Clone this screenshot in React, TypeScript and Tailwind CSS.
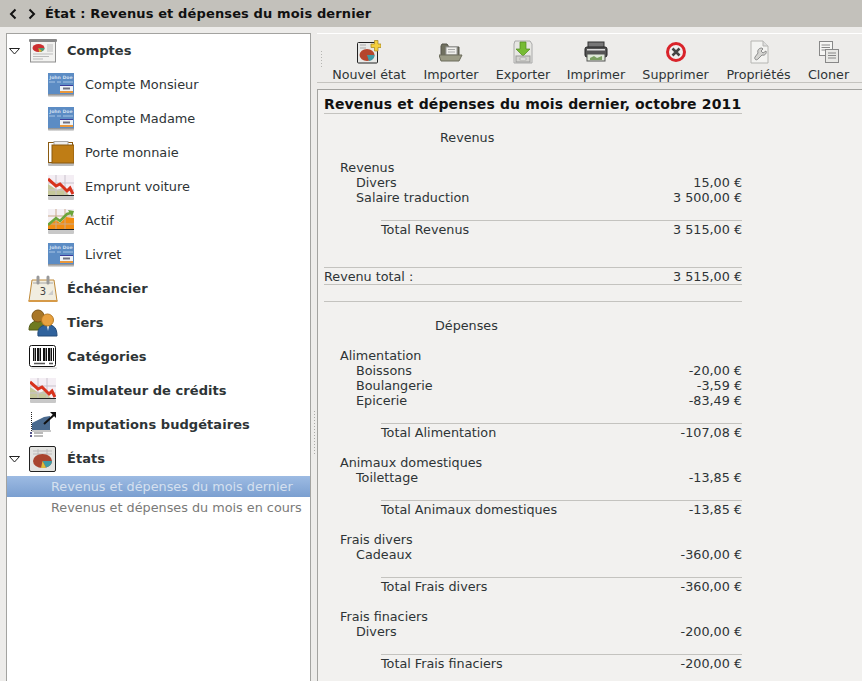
import type { ReactNode } from 'react';

const font = "[font-family:'DejaVu_Sans',sans-serif]";

function CardIcon() {
  return (
    <svg width="26" height="26" viewBox="0 0 26 26" className="shrink-0">
      <defs>
        <linearGradient id="cardshadow" x1="0" y1="0" x2="0" y2="1">
          <stop offset="0" stopColor="#666" />
          <stop offset="1" stopColor="#e4e4e4" />
        </linearGradient>
      </defs>
      <rect x="0" y="20" width="26" height="4" rx="1" fill="url(#cardshadow)" />
      <rect x="0" y="0" width="26" height="21" fill="#5c8cc4" />
      <text x="13" y="5.5" fontSize="4.6" fontWeight="bold" fill="#cfdff0" textAnchor="middle" fontFamily="DejaVu Sans">John Doe</text>
      <path d="M1 9H7M9 9H13M15 9H25" stroke="#a9c5e4" strokeWidth="1" />
      <rect x="12" y="12" width="13" height="1" fill="#3d3d9a" />
      <rect x="12" y="13" width="13" height="5" fill="#eef2f7" />
      <rect x="15" y="14.5" width="7" height="2" fill="#707080" />
      <rect x="12" y="18" width="13" height="2" fill="#e8973c" />
    </svg>
  );
}

function WalletIcon() {
  return (
    <svg width="26" height="26" viewBox="0 0 26 26" className="shrink-0">
      <rect x="0" y="21" width="26" height="4" rx="1" fill="#bbb" />
      <rect x="0.5" y="1.5" width="24" height="20" fill="#fff" stroke="#8a5a10" />
      <rect x="6" y="0.5" width="14" height="5" fill="#eee" stroke="#aaa" />
      <rect x="4" y="4" width="22" height="18" fill="#bf7d15" stroke="#8a5a10" />
    </svg>
  );
}

function ChartDownIcon() {
  return (
    <svg width="26" height="26" viewBox="0 0 26 26" className="shrink-0">
      <rect x="0" y="21" width="26" height="4" rx="1" fill="#c8c8c8" />
      <rect x="0" y="0" width="26" height="21" fill="#f4eef4" />
      <path d="M0 9L9 15L14 13L21 20L26 20V21H0Z" fill="#c5c79a" />
      <path d="M0 8H26M0 15H26M8 0V21M17 0V21" stroke="#c9c2cc" strokeWidth="1" fill="none" />
      <path d="M0 4L8 11L12 9L19 16L22 13L25 19" stroke="#d8321c" strokeWidth="3" fill="none" />
      <rect x="0" y="20" width="26" height="1" fill="#222" />
    </svg>
  );
}

function ChartUpIcon() {
  return (
    <svg width="26" height="26" viewBox="0 0 26 26" className="shrink-0">
      <rect x="0" y="21" width="26" height="4" rx="1" fill="#c8c8c8" />
      <rect x="0" y="0" width="26" height="21" fill="#f4f0f4" />
      <path d="M0 16L8 11L12 14L18 8L26 9V21H0Z" fill="#f28d12" />
      <path d="M0 7H26M8 0V21M17 0V21M0 15H26" stroke="#c9a98a" strokeWidth="1" fill="none" />
      <path d="M0 16L8 9L12 12L19 5L23 4" stroke="#6aa53a" strokeWidth="2.5" fill="none" />
      <path d="M20 1L26 2L24 8Z" fill="#6aa53a" />
      <rect x="0" y="20" width="26" height="1" fill="#222" />
    </svg>
  );
}

function AccountsIcon() {
  return (
    <svg width="28" height="24" viewBox="0 0 28 24" className="shrink-0">
      <rect x="1.5" y="2.5" width="25" height="20.5" fill="#f2f2f0" stroke="#8f8f8f" />
      <rect x="0" y="0" width="28" height="3" rx="1" fill="#888" />
      <ellipse cx="9.5" cy="9" rx="6" ry="4" fill="#cc2f2f" />
      <path d="M9.5 9L15.5 9A6 4 0 0 1 10 13Z" fill="#4d9a78" />
      <path d="M9.5 9L13 12A6 4 0 0 1 10 13Z" fill="#e0b030" />
      <path d="M18 6H24M18 8H24M18 10H24M18 12H24M4 15H24M4 17.5H20M4 20H14" stroke="#bbb" />
    </svg>
  );
}

function CalendarIcon() {
  return (
    <svg width="30" height="28" viewBox="0 0 30 28" className="shrink-0">
      <path d="M4 5H26L29 26H1Z" fill="#f1ede0" stroke="#bf8a3a" />
      <rect x="0.5" y="25" width="29" height="2" fill="#d69a48" />
      <path d="M5 8H25" stroke="#aaa" />
      <path d="M10 2V8M20 2V8" stroke="#999" strokeWidth="3" strokeLinecap="round" />
      <text x="15" y="20" fontSize="10" fill="#444" textAnchor="middle" fontFamily="DejaVu Sans">3</text>
      <path d="M20 20L25 15V20Z" fill="#ccc" />
    </svg>
  );
}

function PeopleIcon() {
  return (
    <svg width="30" height="28" viewBox="0 0 30 28" className="shrink-0">
      <path d="M1 21C1 14 5 12 11 12C17 12 19 16 19 21Z" fill="#6f7a1f" stroke="#525a15" />
      <circle cx="10" cy="7" r="6" fill="#a87627" stroke="#7b5314" />
      <path d="M10 27C9 18 14 16 20 16C26 16 29 19 29 27Z" fill="#2f629c" stroke="#224a78" />
      <path d="M19 17L20 22L21 17Z" fill="#fff" />
      <circle cx="19.5" cy="11" r="6" fill="#e8a13f" stroke="#b87a20" />
    </svg>
  );
}

function BarcodeIcon() {
  const bars = [3, 5, 7, 8, 10, 13, 14, 16, 18, 19, 21, 23];
  return (
    <svg width="28" height="24" viewBox="0 0 28 24" className="shrink-0">
      <rect x="0.5" y="0.5" width="26" height="21" rx="2" fill="#fff" stroke="#111" />
      {bars.map((x, i) => (
        <rect key={i} x={x + 1} y="3" width={i % 3 === 0 ? 1.5 : 1} height="13" fill="#111" />
      ))}
      <path d="M5 18.5H16M20 18.5H24" stroke="#555" strokeWidth="1.5" />
      <path d="M2 23H28" stroke="#ccc" />
    </svg>
  );
}

function BudgetIcon() {
  return (
    <svg width="28" height="28" viewBox="0 0 28 28" className="shrink-0">
      <path d="M2.5 1V20H22" stroke="#222" fill="none" strokeDasharray="1 1" />
      <path d="M3 19V12L15 6L21 5V19Z" fill="#4a6a8e" />
      <path d="M15 13L26 3" stroke="#111" strokeWidth="2" />
      <path d="M21 1H27V7Z" fill="#111" />
      <path d="M1 22H3M1 25H3" stroke="#55558a" strokeWidth="2" />
      <path d="M5 22H14M5 25H14" stroke="#777" />
    </svg>
  );
}

function ReportsIcon() {
  return (
    <svg width="28" height="27" viewBox="0 0 28 27" className="shrink-0">
      <rect x="0.5" y="0.5" width="26" height="25" rx="1.5" fill="#e3e3e0" stroke="#222" />
      <path d="M4 5H23M4 8H23M9 3V10M18 3V10" stroke="#bbb" />
      <ellipse cx="13.5" cy="15" rx="9.5" ry="7" fill="#a9452f" />
      <path d="M13.5 15L23 15A9.5 7 0 0 1 17 21.5Z" fill="#3e9aa5" />
      <path d="M13.5 15L17 21.5A9.5 7 0 0 1 12 22Z" fill="#dcbc3a" />
    </svg>
  );
}

function NewReportIcon() {
  return (
    <svg width="24" height="24" viewBox="0 0 24 24">
      <rect x="0.5" y="2.5" width="20" height="20.5" rx="1" fill="#e8e8e6" stroke="#222" />
      <path d="M3 5H9M3 8H9" stroke="#aaa" />
      <ellipse cx="10" cy="15" rx="7.5" ry="6" fill="#b5452c" />
      <path d="M10 15L17.5 15A7.5 6 0 0 1 12 21Z" fill="#3e9aa5" />
      <path d="M14 4H17.5V0.5H21V4H24V7.5H21V11H17.5V7.5H14Z" fill="#f4cf3e" stroke="#a08220" strokeWidth="0.7" />
    </svg>
  );
}

function ImportIcon() {
  return (
    <svg width="24" height="24" viewBox="0 0 24 24">
      <path d="M2 6V18H20V7H10L8 4H3Z" fill="#70705f" stroke="#55554a" />
      <rect x="7" y="7" width="11" height="8" fill="#f0f0ec" stroke="#999" />
      <path d="M9 9.5H16M9 12H16" stroke="#aaa" />
      <path d="M0 15H23L20 21H2Z" fill="#9a9a84" stroke="#6c6c5c" />
    </svg>
  );
}

function ExportIcon() {
  return (
    <svg width="24" height="24" viewBox="0 0 24 24">
      <path d="M4 1H19L21 4V23H3V4Z" fill="#e6e6e2" stroke="#aaa" />
      <path d="M9 2H15V9H19L12 16L5 9H9Z" fill="#76bb34" stroke="#4f8a1e" strokeWidth="0.7" />
      <rect x="5" y="16" width="14" height="6" fill="#d4d4d0" stroke="#999" />
      <rect x="9" y="18" width="6" height="2" fill="#f5f5f5" stroke="#888" strokeWidth="0.5" />
    </svg>
  );
}

function PrintIcon() {
  return (
    <svg width="24" height="24" viewBox="0 0 24 24">
      <rect x="4" y="2" width="16" height="6" fill="#777" stroke="#333" />
      <rect x="1" y="7" width="22" height="10" rx="2" fill="#555" stroke="#222" />
      <rect x="3" y="9" width="18" height="1.5" fill="#ddd" />
      <rect x="3" y="14" width="18" height="7" fill="#dfe8d8" stroke="#555" />
      <path d="M6 18L10 16L13 18L18 16V20H6Z" fill="#7aa060" />
    </svg>
  );
}

function DeleteIcon() {
  return (
    <svg width="24" height="24" viewBox="0 0 24 24">
      <circle cx="12" cy="12" r="8.5" fill="#eee" stroke="#d9232a" strokeWidth="3" />
      <path d="M8.5 8.5L15.5 15.5M15.5 8.5L8.5 15.5" stroke="#444" strokeWidth="2.5" />
    </svg>
  );
}

function PropsIcon() {
  return (
    <svg width="24" height="24" viewBox="0 0 24 24">
      <path d="M4 1H16L21 6V23H4Z" fill="#f3f3f1" stroke="#b5b5b2" />
      <path d="M16 1V6H21" fill="#ddd" stroke="#b5b5b2" />
      <path d="M15 8C12 8 10 10 11 13L8 17C7 19 9 21 11 19L15 15C18 16 20 13 19 11L16 13L14 11L16 9Z" fill="#d4d4d1" stroke="#777" strokeWidth="0.8" />
    </svg>
  );
}

function CloneIcon() {
  return (
    <svg width="24" height="24" viewBox="0 0 24 24">
      <rect x="2.5" y="1.5" width="13" height="14" fill="#f6f6f4" stroke="#888" />
      <path d="M4.5 5H13M4.5 7.5H13M4.5 10H13" stroke="#888" />
      <rect x="8.5" y="9.5" width="13" height="13" fill="#e9e9e6" stroke="#888" />
      <path d="M11 13H19M11 15.5H19M11 18H19" stroke="#888" />
    </svg>
  );
}

function Triangle() {
  return (
    <svg width="11" height="7" viewBox="0 0 11 7" className="shrink-0">
      <path d="M0.5 0.5H10.5L5.5 6Z" fill="#fff" stroke="#222" />
    </svg>
  );
}

function TopItem({ icon, label, open }: { icon: ReactNode; label: string; open?: boolean }) {
  return (
    <div className="flex h-[34px] items-center">
      <div className="flex w-[20px] shrink-0 justify-start pl-[2px]">{open && <Triangle />}</div>
      <div className="flex w-[30px] shrink-0 translate-x-[1px] justify-center">{icon}</div>
      <span className="ml-[10px] text-[13px] font-bold tracking-[0.06px] text-[#2e3436]">{label}</span>
    </div>
  );
}

function SubItem({ icon, label }: { icon: ReactNode; label: string }) {
  return (
    <div className="flex h-[34px] items-center pl-[41px] pt-[2px]">
      {icon}
      <span className="ml-[11px] -translate-y-[1px] text-[12.9px] text-[#2e3436]">{label}</span>
    </div>
  );
}

function Tool({ icon, label, width }: { icon: ReactNode; label: string; width: string }) {
  return (
    <div className={`flex flex-col items-center ${width}`}>
      <div className="flex h-[24px] items-center">{icon}</div>
      <span className="mt-[2px] whitespace-nowrap text-[12.7px] leading-[17px] text-[#2e3436]">{label}</span>
    </div>
  );
}

function Line({ label, value, indent }: { label: string; value?: string; indent: string }) {
  return (
    <div className={`flex h-[15px] items-center justify-between text-[12.75px] leading-[15px] ${indent}`}>
      <span>{label}</span>
      {value && <span>{value}</span>}
    </div>
  );
}

function Group({ title, items, total, value }: { title: string; items: [string, string][]; total: string; value: string }) {
  return (
    <div className="mb-[15px]">
      <Line label={title} indent="pl-[16px]" />
      {items.map(([label, amount]) => (
        <Line key={label} label={label} value={amount} indent="pl-[32px]" />
      ))}
      <div className="ml-[57px] mt-[15px] border-t border-[#c4c3bf] pt-[1px]">
        <Line label={total} value={value} indent="" />
      </div>
    </div>
  );
}

export default function App() {
  return (
    <div className={`flex h-[681px] w-[862px] flex-col overflow-hidden bg-[#edecea] ${font} text-[#2e3436]`}>
      <div className="flex h-[27px] shrink-0 items-center bg-[#c3c1bb]">
        <svg width="36" height="12" viewBox="0 0 36 12" className="ml-[8px] shrink-0">
          <path d="M7.5 1.5L3 6L7.5 10.5M21.5 1.5L26 6L21.5 10.5" stroke="#111" strokeWidth="2" fill="none" />
        </svg>
        <span className="ml-[1px] text-[13px] font-bold tracking-[0.13px] text-[#111]">État : Revenus et dépenses du mois dernier</span>
      </div>

      <div className="flex min-h-0 flex-1 pt-[6px]">
        <div className="ml-[6px] w-[305px] shrink-0 border-x border-t border-[#a3a3a0] bg-white pt-0">
          <TopItem open icon={<AccountsIcon />} label="Comptes" />
          <SubItem icon={<CardIcon />} label="Compte Monsieur" />
          <SubItem icon={<CardIcon />} label="Compte Madame" />
          <SubItem icon={<WalletIcon />} label="Porte monnaie" />
          <SubItem icon={<ChartDownIcon />} label="Emprunt voiture" />
          <SubItem icon={<ChartUpIcon />} label="Actif" />
          <SubItem icon={<CardIcon />} label="Livret" />
          <TopItem icon={<CalendarIcon />} label="Échéancier" />
          <TopItem icon={<PeopleIcon />} label="Tiers" />
          <TopItem icon={<BarcodeIcon />} label="Catégories" />
          <TopItem icon={<ChartDownIcon />} label="Simulateur de crédits" />
          <TopItem icon={<BudgetIcon />} label="Imputations budgétaires" />
          <TopItem open icon={<ReportsIcon />} label="États" />
          <div className="flex h-[21px] items-center bg-gradient-to-b from-[#9dbbe3] to-[#7b9fd0] pl-[44px] pt-[1px] text-[12.8px] text-[#d5e0ef]">
            Revenus et dépenses du mois dernier
          </div>
          <div className="flex h-[21px] items-center pl-[44px] pt-[1px] text-[12.8px] text-[#7a7a78]">
            Revenus et dépenses du mois en cours
          </div>
        </div>

        <div className="flex w-[6px] shrink-0 items-center justify-center">
          <div className="mt-[150px] h-[44px] w-[3px] bg-[radial-gradient(#a9a9a6_1px,transparent_1px)] bg-[length:3px_3px]" />
        </div>

        <div className="flex min-w-0 flex-1 flex-col">
          <div className="flex h-[50px] shrink-0 items-start border-y border-b-[#c4c3bf] border-t-white pt-[6px]">
            <div className="ml-[3px] mt-[10px] h-[18px] w-[3px] shrink-0 bg-[radial-gradient(#b5b5b2_1px,transparent_1px)] bg-[length:3px_3px]" />
            <Tool icon={<NewReportIcon />} label="Nouvel état" width="ml-[9px] w-[74px]" />
            <Tool icon={<ImportIcon />} label="Importer" width="ml-[17px] w-[56px]" />
            <Tool icon={<ExportIcon />} label="Exporter" width="ml-[17px] w-[54px]" />
            <Tool icon={<PrintIcon />} label="Imprimer" width="ml-[17px] w-[58px]" />
            <Tool icon={<DeleteIcon />} label="Supprimer" width="ml-[17px] w-[67px]" />
            <Tool icon={<PropsIcon />} label="Propriétés" width="ml-[17px] w-[65px]" />
            <Tool icon={<CloneIcon />} label="Cloner" width="ml-[17px] w-[41px]" />
          </div>
          <div className="mt-[6px] min-h-0 flex-1 overflow-hidden border-l border-t border-[#a3a3a0] bg-[#f2f1ef] pl-[6px] pr-[120px] pt-[6px]">
            <h1 className="whitespace-nowrap border-b border-[#c4c3bf] text-[14px] font-bold leading-[17px] tracking-[0.14px] text-[#111]">
              Revenus et dépenses du mois dernier, octobre 2011
            </h1>
            <div className="ml-[116px] mt-[16px] h-[15px] text-[12.75px] leading-[15px]">Revenus</div>
            <div className="mt-[15px]">
              <Group title="Revenus" items={[['Divers', '15,00 €'], ['Salaire traduction', '3 500,00 €']]} total="Total Revenus" value="3 515,00 €" />
            </div>
            <div className="mt-[30px] border-y border-[#c4c3bf] pt-[1px]">
              <Line label="Revenu total :" value="3 515,00 €" indent="" />
            </div>
            <div className="mt-[16px] border-t border-[#c4c3bf]" />
            <div className="ml-[111px] mt-[16px] h-[15px] text-[12.75px] leading-[15px]">Dépenses</div>
            <div className="mt-[15px]">
              <Group title="Alimentation" items={[['Boissons', '-20,00 €'], ['Boulangerie', '-3,59 €'], ['Epicerie', '-83,49 €']]} total="Total Alimentation" value="-107,08 €" />
              <Group title="Animaux domestiques" items={[['Toilettage', '-13,85 €']]} total="Total Animaux domestiques" value="-13,85 €" />
              <Group title="Frais divers" items={[['Cadeaux', '-360,00 €']]} total="Total Frais divers" value="-360,00 €" />
              <Group title="Frais finaciers" items={[['Divers', '-200,00 €']]} total="Total Frais finaciers" value="-200,00 €" />
            </div>
          </div>
        </div>
      </div>
    </div>
  );
}
